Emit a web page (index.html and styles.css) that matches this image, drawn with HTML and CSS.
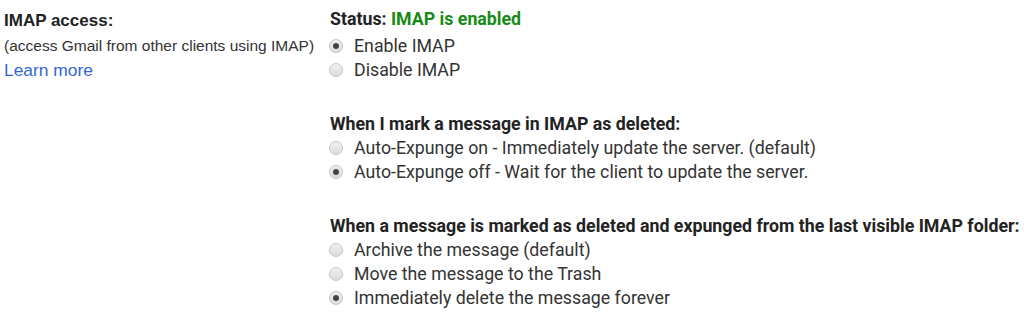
FILE: index.html
```html
<!DOCTYPE html>
<html>
<head>
<meta charset="utf-8">
<link rel="stylesheet" href="styles.css">
</head>
<body>
<div class="row">
  <div class="label-col">
    <div class="title">IMAP access:</div>
    <div class="sub">(access Gmail from other clients using IMAP)</div>
    <a class="link" href="#">Learn more</a>
  </div>
  <div class="opts-col">
    <div class="section">
      <div class="heading first">Status: <span class="ok">IMAP is enabled</span></div>
      <div class="opt"><span class="radio on"></span>Enable IMAP</div>
      <div class="opt"><span class="radio"></span>Disable IMAP</div>
    </div>
    <div class="section">
      <div class="heading">When I mark a message in IMAP as deleted:</div>
      <div class="opt"><span class="radio"></span>Auto-Expunge on - Immediately update the server. (default)</div>
      <div class="opt"><span class="radio on"></span>Auto-Expunge off - Wait for the client to update the server.</div>
    </div>
    <div class="section">
      <div class="heading">When a message is marked as deleted and expunged from the last visible IMAP folder:</div>
      <div class="opt"><span class="radio"></span>Archive the message (default)</div>
      <div class="opt"><span class="radio"></span>Move the message to the Trash</div>
      <div class="opt"><span class="radio on"></span>Immediately delete the message forever</div>
    </div>
  </div>
</div>
</body>
</html>
```
FILE: styles.css
```css
html, body {
  margin: 0;
  padding: 0;
  background: #fff;
  color: #222;
}
.row {
  display: flex;
}
.label-col {
  width: 326px;
  padding: 9px 0 0 4px;
  display: flex;
  flex-direction: column;
  font-family: "Liberation Sans", Arial, sans-serif;
  line-height: 24px;
}
.title {
  font-weight: bold;
  font-size: 17px;
}
.sub {
  font-size: 15.5px;
  color: #333;
  margin-top: 1px;
}
.link {
  font-size: 17.4px;
  color: #3367d6;
  text-decoration: none;
}
.opts-col {
  padding: 7px 0 0 0;
  display: flex;
  flex-direction: column;
  gap: 30px;
  font-family: Roboto, "Liberation Sans", sans-serif;
  font-size: 17.75px;
  line-height: 24px;
}
.heading {
  font-weight: bold;
  color: #222;
}
.heading.first {
  margin-bottom: 3px;
}
.ok {
  color: #188a18;
}
.opt {
  display: flex;
  align-items: center;
  color: #333;
}
.radio {
  box-sizing: border-box;
  width: 14px;
  height: 14px;
  margin: 0 11px 0 -1px;
  border-radius: 50%;
  border: 1px solid #c2c2c2;
  background: linear-gradient(#f0f0f0, #dcdcdc);
  display: flex;
  align-items: center;
  justify-content: center;
}
.radio.on::after {
  content: "";
  width: 6px;
  height: 6px;
  border-radius: 50%;
  background: #444;
}
```
